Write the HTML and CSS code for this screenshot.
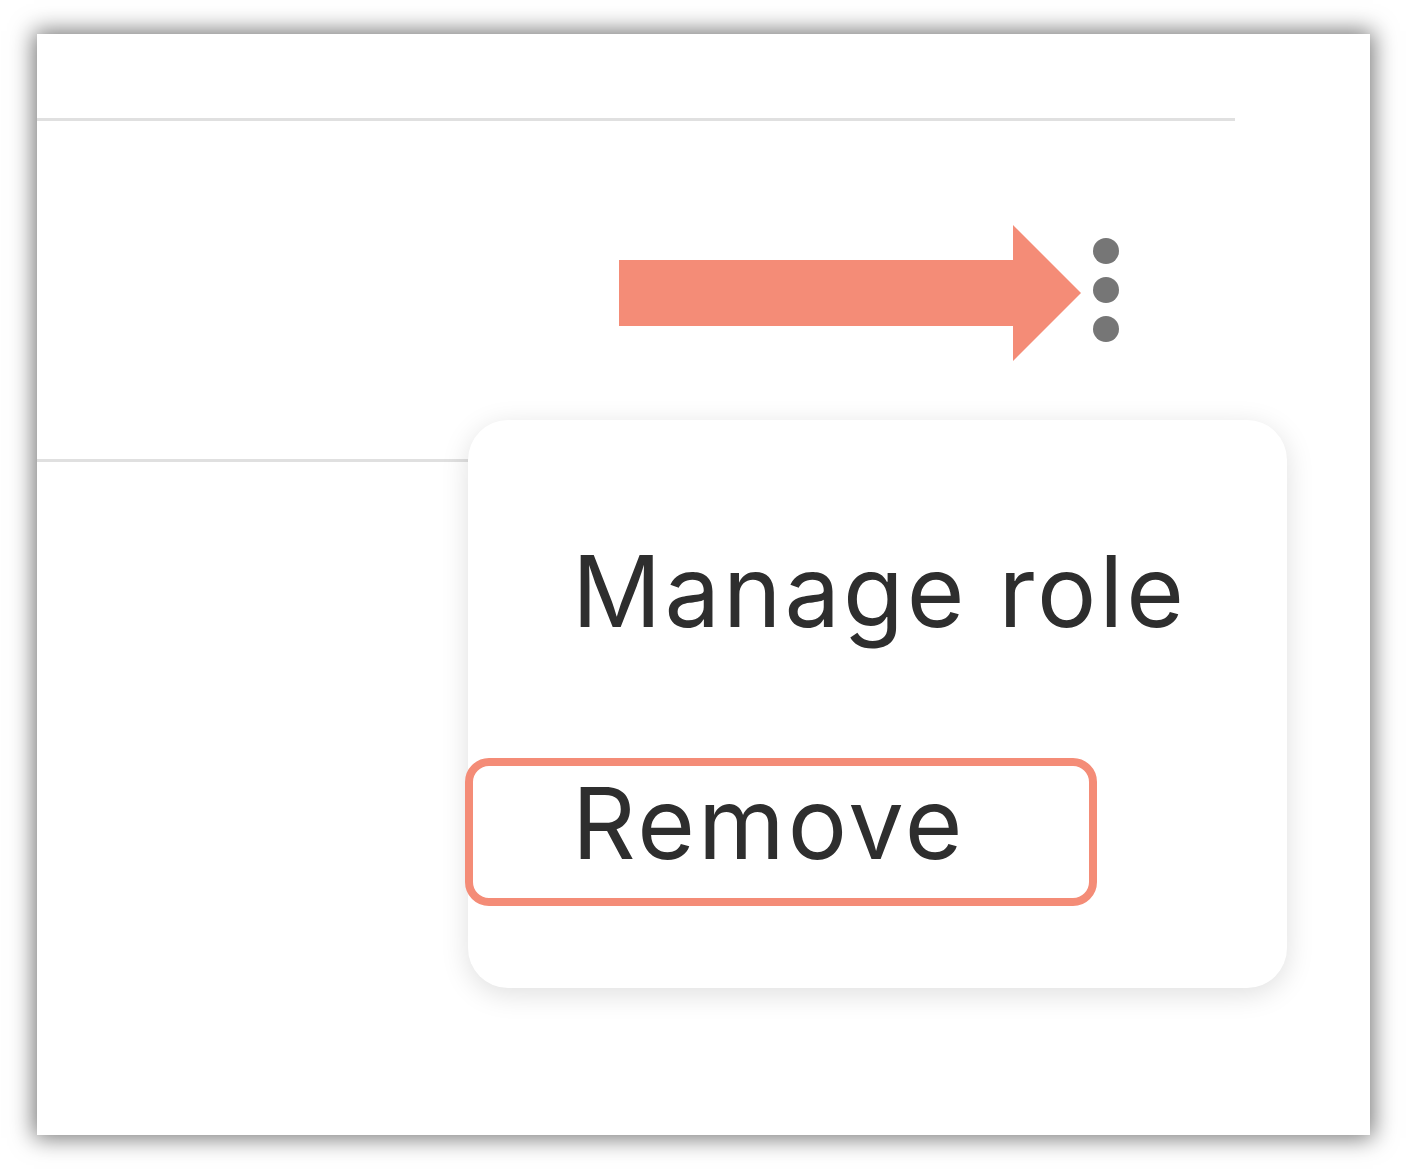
FILE: index.html
```html
<!DOCTYPE html>
<html lang="en">

<head>
    <meta charset="UTF-8">
    <meta name="viewport" content="width=device-width, initial-scale=1.0">
    <title>Members</title>
    <link rel="stylesheet" href="styles.css">
</head>

<body>

    <!-- Panneau de la liste des membres -->
    <div class="panel">
        <div class="member-row header-row"></div>

        <div class="member-row">
            <button class="kebab-btn" aria-label="More actions">
                <span></span><span></span><span></span>
            </button>
        </div>

        <!-- Flèche d'annotation vers le bouton d'actions -->
        <svg class="pointer-arrow" width="462" height="136" viewBox="0 0 462 136">
            <polygon points="0,35 394,35 394,0 462,68 394,136 394,101 0,101" fill="#f48c77"/>
        </svg>

        <!-- Menu contextuel -->
        <ul class="actions-menu">
            <li class="menu-item">Manage role</li>
            <li class="menu-item is-marked">Remove<span class="mark-box"></span></li>
        </ul>
    </div>

</body>

</html>
```

FILE: styles.css
```css
/* Style global */
body, html {
    margin: 0;
    padding: 0;
    background: #fff;
    font-family: Inter, Roboto, "Noto Sans", Arial, sans-serif;
}

body {
    padding: 34px 0 34px 37px;
}

/* Panneau principal */
.panel {
    position: relative;
    width: 1333px;
    height: 1101px;
    background: #fff;
    box-shadow: 0 0 22px 3px rgba(0, 0, 0, 0.55);
}

/* Lignes de la liste */
.member-row {
    display: flex;
    align-items: center;
    justify-content: flex-end;
    margin-right: 135px;
    border-bottom: 3px solid #e0e0e0;
    height: 338px;
    padding-right: 116px;
}

.member-row.header-row {
    height: 84px;
}

/* Bouton à trois points */
.kebab-btn {
    display: flex;
    flex-direction: column;
    gap: 13px;
    padding: 0;
    border: none;
    background: none;
    cursor: pointer;
}

.kebab-btn span {
    display: block;
    width: 26px;
    height: 26px;
    border-radius: 50%;
    background: #767676;
}

/* Flèche */
.pointer-arrow {
    position: absolute;
    left: 582px;
    top: 191px;
}

/* Menu des actions */
.actions-menu {
    position: absolute;
    left: 431px;
    top: 386px;
    width: 819px;
    margin: 0;
    padding: 55px 0 49px;
    list-style: none;
    background: #fff;
    border-radius: 40px;
    box-shadow: 0 6px 28px rgba(0, 0, 0, 0.13);
    box-sizing: border-box;
}

.menu-item {
    position: relative;
    padding: 58px 0 58px 104px;
    font-size: 99px;
    line-height: 116px;
    letter-spacing: 3px;
    color: #2e2e2e;
}

/* Cadre de mise en évidence */
.mark-box {
    position: absolute;
    left: -3px;
    top: 51px;
    width: 632px;
    height: 148px;
    border: 8px solid #f48c77;
    border-radius: 24px;
    box-sizing: border-box;
}
```
